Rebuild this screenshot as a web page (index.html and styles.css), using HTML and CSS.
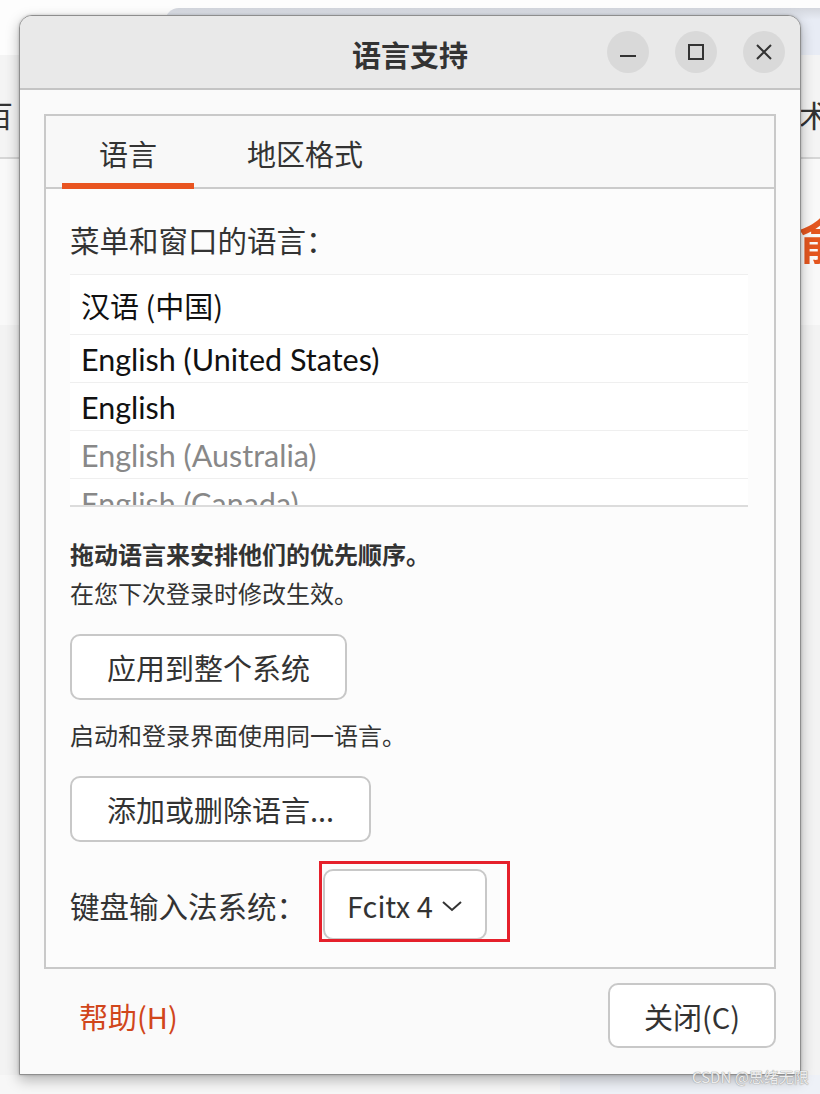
FILE: index.html
```html
<!DOCTYPE html>
<html lang="zh-CN">
<head>
<meta charset="utf-8">
<title>语言支持</title>
<link rel="stylesheet" href="styles.css">
</head>
<body>
<div class="desk">
  <div class="desk-top">
    <div class="desk-top-left"></div>
    <div class="desk-top-right"></div>
  </div>
  <div class="desk-nav">
    <span class="desk-char left">百</span>
    <span class="desk-char right">术</span>
  </div>
  <div class="desk-head">
    <span class="desk-char accent">俞</span>
  </div>
  <div class="desk-rest"></div>
  <div class="desk-bottom">
    <div class="desk-bottom-left"></div>
    <div class="desk-bottom-right"></div>
  </div>
</div>

<div class="window">
  <header class="titlebar">
    <div></div>
    <h1 class="title">语言支持</h1>
    <div class="controls">
      <span class="ctl"><svg width="18" height="18" viewBox="0 0 18 18"><path d="M1 13h16" stroke="#333" stroke-width="2"/></svg></span>
      <span class="ctl"><svg width="18" height="18" viewBox="0 0 18 18"><rect x="2" y="2" width="14" height="14" fill="none" stroke="#333" stroke-width="2"/></svg></span>
      <span class="ctl"><svg width="18" height="18" viewBox="0 0 18 18"><path d="M2 2l14 14M16 2L2 16" stroke="#333" stroke-width="2"/></svg></span>
    </div>
  </header>

  <main class="win-body">
    <section class="notebook">
      <nav class="tabs">
        <span class="tab active">语言</span>
        <span class="tab">地区格式</span>
      </nav>
      <div class="page">
        <p class="label big">菜单和窗口的语言：</p>
        <ul class="lang-list">
          <li class="row first">汉语 (中国)</li>
          <li class="row">English (United States)</li>
          <li class="row">English</li>
          <li class="row dim">English (Australia)</li>
          <li class="row dim">English (Canada)</li>
        </ul>
        <p class="label small bold hint1">拖动语言来安排他们的优先顺序。</p>
        <p class="label small hint2">在您下次登录时修改生效。</p>
        <button class="btn btn-apply">应用到整个系统</button>
        <p class="label small hint3">启动和登录界面使用同一语言。</p>
        <button class="btn btn-add">添加或删除语言...</button>
        <div class="im-row">
          <span class="label big">键盘输入法系统：</span>
          <span class="combo-wrap">
            <button class="btn combo">Fcitx 4<svg class="chev" width="22" height="12" viewBox="0 0 22 12"><path d="M2 2l9 8 9-8" fill="none" stroke="#333" stroke-width="2"/></svg></button>
            <span class="mark"></span>
          </span>
        </div>
      </div>
    </section>
    <footer class="actions">
      <button class="btn flat help">帮助(H)</button>
      <button class="btn close">关闭(C)</button>
    </footer>
  </main>
</div>

<div class="watermark">CSDN @思绪无限</div>
</body>
</html>
```

FILE: styles.css
```css
* { box-sizing: border-box; }
html, body {
  margin: 0;
  padding: 0;
}
body {
  width: 820px;
  height: 1094px;
  overflow: hidden;
  position: relative;
  background: #f7f7f7;
  font-family: "Noto Sans CJK SC", "Noto Sans", sans-serif;
  color: #333;
}

/* ---------- desktop behind the dialog ---------- */
.desk {
  display: flex;
  flex-direction: column;
  height: 1094px;
}
.desk-top {
  display: flex;
  height: 55px;
  background: #fdfdfd;
}
.desk-top-left { width: 165px; }
.desk-top-right {
  flex: 1;
  margin-top: 8px;
  border-top-left-radius: 14px;
  background: linear-gradient(#d3d6dd, #e8ecf5 12px);
}
.desk-nav {
  height: 104px;
  background: #f4f4f4;
  border-bottom: 2px solid #d6d6d6;
  display: flex;
  justify-content: space-between;
  align-items: flex-start;
  padding-top: 41px;
}
.desk-char {
  font-size: 30px;
  line-height: 36px;
  color: #333;
}
.desk-char.left { margin-left: -17px; }
.desk-char.right { margin-right: -9px; }
.desk-head {
  height: 166px;
  background: #f9f9f9;
  display: flex;
  justify-content: flex-end;
  padding-top: 50px;
}
.desk-char.accent {
  color: #e4561f;
  font-size: 50px;
  line-height: 56px;
  font-weight: 700;
  margin-right: -28px;
}
.desk-rest {
  flex: 1;
  background: #f3f3f3;
}
.desk-bottom {
  display: flex;
  height: 19px;
}
.desk-bottom-left { width: 560px; background: #f7f7f7; }
.desk-bottom-right { flex: 1; background: #eef1f7; }

/* ---------- dialog window ---------- */
.window {
  position: absolute;
  left: 19px;
  top: 15px;
  width: 782px;
  height: 1060px;
  border: 1px solid #8e8e8e;
  border-radius: 13px 13px 0 0;
  background: #fafafa;
  box-shadow: 0 5px 14px rgba(0, 0, 0, 0.28), 0 0 3px rgba(0, 0, 0, 0.2);
  display: flex;
  flex-direction: column;
  overflow: hidden;
}
.titlebar {
  height: 74px;
  flex: none;
  background: #e9e9e9;
  border-bottom: 2px solid #c4c4c4;
  display: grid;
  grid-template-columns: 1fr auto 1fr;
  align-items: center;
  padding: 0 15px 0 15px;
}
.title {
  margin: 0;
  font-size: 29px;
  font-weight: 700;
  color: #333;
  line-height: 40px;
  padding-top: 3px;
}
.controls {
  display: flex;
  justify-content: flex-end;
  gap: 26px;
}
.ctl {
  width: 42px;
  height: 42px;
  border-radius: 50%;
  background: #d9d9d9;
  display: flex;
  align-items: center;
  justify-content: center;
}

.win-body {
  flex: 1;
  display: flex;
  flex-direction: column;
  padding: 24px 24px 0 24px;
}

/* notebook */
.notebook {
  border: 2px solid #c9c9c9;
  height: 855px;
  display: flex;
  flex-direction: column;
  background: #fcfcfc;
}
.tabs {
  height: 73px;
  flex: none;
  display: flex;
  gap: 16px;
  padding-left: 16px;
  border-bottom: 2px solid #cbcbcb;
  background: #f8f8f8;
}
.tab {
  padding: 0 37px;
  font-size: 29px;
  line-height: 40px;
  display: flex;
  align-items: center;
  color: #333;
  margin-bottom: -2px;
  border-bottom: 6px solid transparent;
  padding-top: 6px;
}
.tab.active { border-bottom-color: #e95420; }

.page {
  flex: 1;
  padding: 30px 26px 0 24px;
  display: flex;
  flex-direction: column;
  align-items: flex-start;
}
.label {
  margin: 0;
  color: #333;
}
.label.big {
  font-size: 29.5px;
  line-height: 40px;
}
.label.small {
  font-size: 24px;
  line-height: 36px;
}
.label.bold { font-weight: 700; }

.lang-list {
  list-style: none;
  margin: 15px 0 0 0;
  padding: 0;
  align-self: stretch;
  height: 233px;
  overflow: hidden;
  border-top: 1px solid #efefef;
  border-bottom: 2px solid #dcdcdc;
  background: #fff;
}
.row {
  height: 48px;
  border-bottom: 1px solid #efefef;
  padding-left: 11px;
  display: flex;
  align-items: center;
  font-family: "Lato", "Noto Sans CJK SC", sans-serif;
  font-size: 30.5px;
  color: #111;
  white-space: nowrap;
}
.row.first {
  height: 60px;
  font-family: "Noto Sans CJK SC", sans-serif;
  font-size: 29px;
  padding-top: 0;
}
.row.dim { color: #888; }

.hint1 { margin-top: 29px; }
.hint2 { margin-top: 3px; }
.hint3 { margin-top: 17px; }

.btn {
  font-family: "Noto Sans CJK SC", "Noto Sans", sans-serif;
  font-size: 29px;
  line-height: 40px;
  color: #333;
  background: #ffffff;
  border: 2px solid #c8c8c8;
  border-radius: 10px;
  padding: 11px 35px;
  cursor: pointer;
}
.btn-apply { margin-top: 23px; height: 66px; width: 277px; padding: 0; }
.btn-add { margin-top: 23px; height: 66px; width: 301px; padding: 0; }

.im-row {
  margin-top: 27px;
  display: flex;
  align-items: center;
  gap: 17px;
}
.combo-wrap {
  position: relative;
  display: inline-flex;
}
.combo {
  height: 71px;
  width: 164px;
  padding: 0 0 0 22px;
  display: flex;
  align-items: center;
  gap: 8px;
}
.chev { margin-top: 2px; }
.mark {
  position: absolute;
  left: -4px;
  top: -8px;
  width: 191px;
  height: 81px;
  border: 3px solid #e5202b;
  pointer-events: none;
}

.actions {
  display: flex;
  justify-content: space-between;
  align-items: center;
  margin-top: 14px;
}
.btn.flat {
  background: transparent;
  border-color: transparent;
  color: #d1461b;
  height: 65px;
  padding: 0 33px;
}
.btn.close {
  height: 65px;
  width: 168px;
  padding: 0;
}

.watermark {
  position: absolute;
  left: 692px;
  top: 1066px;
  font-size: 15px;
  line-height: 22px;
  color: #ececec;
  text-shadow: 0 0 1px #999, 0 0 1px #999;
  white-space: nowrap;
}
```
